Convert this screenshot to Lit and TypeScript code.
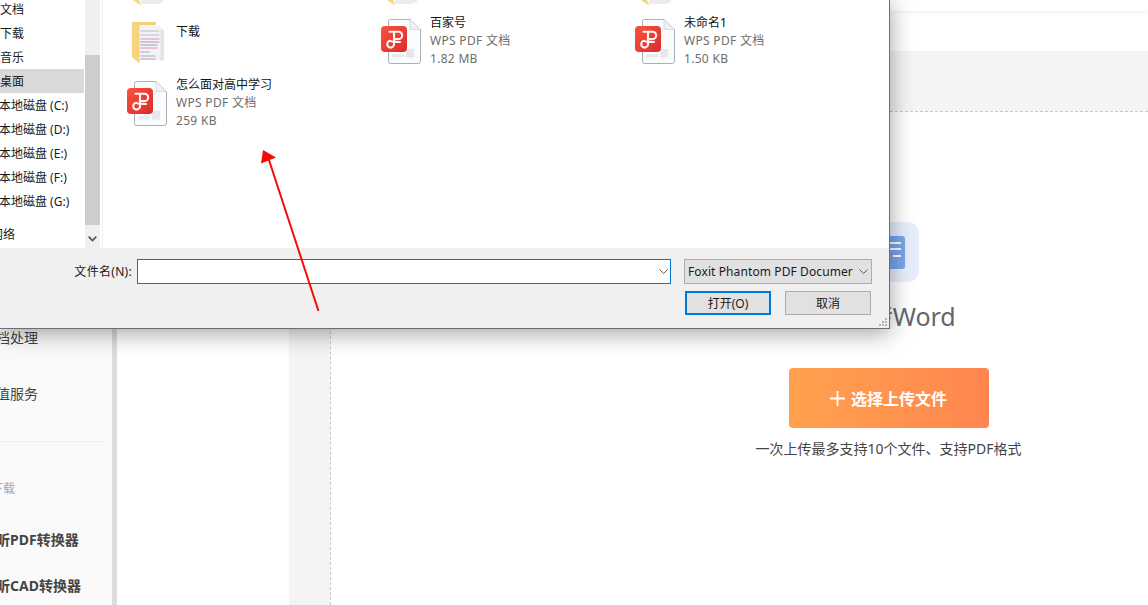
import { LitElement, html, css, svg } from "lit";
import { customElement } from "lit/decorators.js";

const chevron = svg`<path d="M0.500 0.500 L4.500 4.500 L8.500 0.500" fill="none" stroke="#555" stroke-width="1"/>`;

const pdfIcon = html`<svg class="ficon" width="40" height="46" viewBox="0 0 40 46">
  <defs><linearGradient id="pg" x1="0" y1="0" x2="1" y2="1"><stop offset="0" stop-color="#fb5240"/><stop offset="1" stop-color="#d92c2c"/></linearGradient></defs>
  <path d="M7.500 2.500 Q7.500 .5 9.500 .5 H29 L39.500 10.500 V42.500 Q39.500 44.500 37.500 44.500 H9.500 Q7.500 44.500 7.500 42.500 Z" fill="#f9fbfd" stroke="#aab0ba"/>
  <path d="M29 .5 V10.500 H39.500" fill="#eef0f4" stroke="#c8ccd3" stroke-width=".6"/>
  <rect x="11" y="35" width="12" height="3.500" fill="#e9ebef"/>
  <rect x="25" y="30" width="8" height="8.500" fill="#e6e8ec"/>
  <rect x="0" y="7" width="26" height="26" rx="4" fill="url(#pg)"/>
  <path d="M8.500 12.700 H17.500 A3.700 3.700 0 0 1 17.500 20.100 H13 M13 12.700 V25.200 A3.400 3.400 0 1 1 9.600 21.800 Q10 23 19 23" fill="none" stroke="#fff" stroke-opacity=".95" stroke-width="2.100" stroke-linecap="round" stroke-linejoin="round"/>
</svg>`;

const folderIcon = html`<svg class="ficon folder" width="34" height="42" viewBox="0 0 36 42" preserveAspectRatio="none">
  <path d="M1 0 H26 V8 H9 V41 L1 35 Z" fill="#f4d683"/>
  <path d="M9 3 H31 V38 H9 Z" fill="#f3f3f5"/>
  <path d="M31 6 L35 8 V38 L31 39 Z" fill="#e4e4e6"/>
  <path d="M9 3 L26 3 V0 H1 L9 3Z" fill="#f0cf78"/>
  <g stroke-width="1">
    <path d="M10 9 H30 M10 13 H30" stroke="#b9b9c4"/>
    <path d="M10 17 H30" stroke="#cd8fd2"/>
    <path d="M10 20 H30 M10 23 H28" stroke="#9a9ab0"/>
    <path d="M10 26 H28" stroke="#e08dba"/>
    <path d="M10 30 H20 M10 34 H26" stroke="#a2a2bc"/>
    <path d="M10 37 H26" stroke="#bc92d2"/>
  </g>
  <path d="M1 0 L9 5 V41 L1 35 Z" fill="#f5d47f"/>
</svg>`;

const folderPeek = html`<svg class="peek" width="32" height="6" viewBox="0 0 32 6">
  <path d="M0 0 H6 L8 5 H7 Z" fill="#f4d683"/><path d="M8 0 H30 V2 L24 4 H8 Z" fill="#ececec"/>
</svg>`;

@customElement("app-root")
export class AppRoot extends LitElement {
  static styles = css`
    :host { display: block; position: relative; width: 1148px; height: 605px; overflow: hidden; background: #fff;
      font-family: "Noto Sans", "Noto Sans CJK SC", sans-serif; }
    .page { display: flex; height: 605px; }
    .side { width: 112px; flex: none; background: #fafafa; padding-top: 310px; box-sizing: border-box; color: #444; font-size: 14px; overflow: hidden; }
    .side-row { height: 56px; line-height: 56px; margin-left: -18px; white-space: nowrap; }
    .side hr { border: 0; border-top: 1px solid #efefef; margin: 19px 7px 0 0; }
    .side-sub { margin: 33px 0 0 -45px; height: 28px; line-height: 28px; font-size: 12px; color: #a3a5bd; white-space: nowrap; }
    .side-bold { margin: 21px 0 0 -18px; height: 31px; line-height: 31px; font-weight: 700; white-space: nowrap; }
    .side-bold + .side-bold { margin-top: 15px; }
    .rule { width: 5px; flex: none; background: #dcdcdc; }
    .panel { width: 172px; flex: none; background: #fff; }
    .main { flex: 1; display: flex; flex-direction: column; min-width: 0; }
    .top { height: 11px; flex: none; background: #fff; box-shadow: 0 1px 4px rgba(0,0,0,.08); position: relative; }
    .sub { height: 40px; flex: none; background: #fff; }
    .work { flex: 1; background: #f4f4f4; padding: 60px 0 0 41px; display: flex; min-height: 0; }
    .drop { flex: 1; background: #fff; border-left: 1px dashed #c8c8c8; border-top: 1px dashed #c8c8c8; padding: 110px 0 0 298px;
      display: flex; flex-direction: column; align-items: center; }
    .tile { width: 60px; height: 60px; border-radius: 12px; background: #e6eefc; display: flex; align-items: center; justify-content: center; }
    .tile svg { display: block; }
    .title { margin-top: 16px; height: 36px; line-height: 36px; font-size: 25px; color: #62676f; }
    .go { margin-top: 34px; width: 200px; height: 60px; border-radius: 4px; background: linear-gradient(90deg, #ffa24e, #ff8650);
      color: #fff; font-size: 16px; font-weight: 700; display: flex; align-items: center; justify-content: center; gap: 6px; }
    .go svg { display: block; }
    .hint { margin-top: 11px; line-height: 20px; font-size: 14px; color: #444; white-space: nowrap; }

    .dialog { position: absolute; left: 0; top: 0; width: 890px; height: 329px; box-sizing: border-box; background: #f0f0f0;
      border-right: 1px solid #6e6e6e; border-bottom: 1px solid #6e6e6e; box-shadow: 0 4px 22px rgba(0,0,0,.38);
      display: flex; flex-direction: column; font-size: 12px; color: #1a1a1a; }
    .body { height: 248px; flex: none; display: flex; background: #fff; overflow: hidden; }
    .nav { width: 85px; flex: none; overflow: hidden; }
    .nav-row { height: 24px; line-height: 26px; margin-right: 1px; white-space: nowrap; }
    .nav-row:first-child { margin-top: -3px; }
    .nav-row.sel { background: #d9d9d9; }
    .nav-row.clip { text-indent: -1px; }
    .nav-row.net { margin-top: 8px; text-indent: -9px; line-height: 28px; }
    .bar { width: 15px; flex: none; background: #f0f0f0; display: flex; flex-direction: column; }
    .bar-gap { height: 55px; flex: none; }
    .thumb { height: 170px; flex: none; background: #cdcdcd; }
    .bar-arrow { flex: 1; display: flex; align-items: center; justify-content: center; padding-top: 5px; padding-right: 1px; }
    .bar-arrow svg { display: block; }
    .split { width: 1px; flex: none; margin-left: 2px; background: #f0f0f0; }
    .files { flex: 1; padding-left: 19px; margin-top: -49px; display: grid; grid-template-columns: repeat(3, 254px); grid-auto-rows: 62px; align-content: start; }
    .file { position: relative; display: flex; min-width: 0; }
    .ficon { display: block; flex: none; margin: 6px 9px 0 5px; }
    .folder { margin: 9px 11px 0 9px; }
    .peek { display: block; margin: 49px 0 0 11px; }
    .meta { display: flex; flex-direction: column; padding-top: 1px; line-height: 18px; color: #6d6d6d; }
    .meta span { letter-spacing: .3px; }
    .meta b { font-weight: 400; color: #111; }
    .meta.single { padding-top: 10px; }
    .foot { flex: 1; position: relative; display: grid; grid-template-columns: 137px 534px 187px; padding-top: 11px; align-content: start; }
    .lbl { line-height: 26px; text-align: right; padding-right: 5px; white-space: nowrap; letter-spacing: .3px; }
    .input { height: 25px; box-sizing: border-box; background: #fff; border: 1px solid #0078d7; display: flex; align-items: center; justify-content: flex-end; padding-right: 2px; }
    .input svg, .select svg { display: block; flex: none; }
    .select { height: 25px; box-sizing: border-box; margin-left: 13px; width: 188px; background: #e1e1e1; border: 1px solid #adadad; display: flex; align-items: center;
      padding: 0 3px; gap: 3px; overflow: hidden; letter-spacing: .1px; }
    .select span { flex: 1; overflow: hidden; white-space: nowrap; }
    .actions { grid-column: 3; display: flex; margin: 6px 0 0 14px; gap: 14px; }
    .btn { width: 86px; height: 24px; flex: none; box-sizing: border-box; background: #e1e1e1; border: 1px solid #adadad; display: flex; align-items: center; justify-content: center; }
    .btn.def { border: 2px solid #0078d7; }
    .grip { position: absolute; right: 1px; bottom: 1px; display: block; }
    .arrow { position: absolute; left: 0; top: 0; display: block; pointer-events: none; }
  `;

  private file(name: string, size: string) {
    return html`<div class="file">${pdfIcon}<div class="meta"><b>${name}</b><span>WPS PDF 文档</span><span>${size}</span></div></div>`;
  }

  render() {
    return html`
      <div class="page">
        <aside class="side">
          <div class="side-row">文档处理</div>
          <div class="side-row">增值服务</div>
          <hr />
          <div class="side-sub">客户端下载</div>
          <div class="side-bold">福昕PDF转换器</div>
          <div class="side-bold">福昕CAD转换器</div>
        </aside>
        <div class="rule"></div>
        <div class="panel"></div>
        <main class="main">
          <div class="top"></div>
          <div class="sub"></div>
          <div class="work">
            <section class="drop">
              <div class="tile">
                <svg width="32" height="33" viewBox="0 0 32 33">
                  <path d="M3 0 H29 Q32 0 32 3 V30 Q32 33 29 33 H3 Q0 33 0 30 V3 Q0 0 3 0Z" fill="#7ba6ee"/>
                  <path d="M8 7 H28 M8 13 H28 M20 20 H28" stroke="#fff" stroke-width="1.800"/>
                </svg>
              </div>
              <div class="title">PDF转Word</div>
              <div class="go">
                <svg width="15" height="15" viewBox="0 0 15 15"><path d="M7.500 0 V15 M0 7.500 H15" stroke="#fff" stroke-width="1.800"/></svg>
                选择上传文件
              </div>
              <div class="hint">一次上传最多支持10个文件、支持PDF格式</div>
            </section>
          </div>
        </main>
      </div>

      <div class="dialog">
        <div class="body">
          <nav class="nav">
            <div class="nav-row">文档</div>
            <div class="nav-row">下载</div>
            <div class="nav-row">音乐</div>
            <div class="nav-row sel">桌面</div>
            <div class="nav-row clip">本地磁盘 (C:)</div>
            <div class="nav-row clip">本地磁盘 (D:)</div>
            <div class="nav-row clip">本地磁盘 (E:)</div>
            <div class="nav-row clip">本地磁盘 (F:)</div>
            <div class="nav-row clip">本地磁盘 (G:)</div>
            <div class="nav-row net">网络</div>
          </nav>
          <div class="bar">
            <div class="bar-gap"></div>
            <div class="thumb"></div>
            <div class="bar-arrow">
              <svg width="9" height="6" viewBox="0 0 9 6"><path d="M.7 .7 L4.500 4.500 L8.300 .7" fill="none" stroke="#555" stroke-width="1.700"/></svg>
            </div>
          </div>
          <div class="split"></div>
          <div class="files">
            <div class="file">${folderPeek}</div>
            <div class="file">${folderPeek}</div>
            <div class="file">${folderPeek}</div>
            <div class="file">${folderIcon}<div class="meta single"><b>下载</b></div></div>
            ${this.file("百家号", "1.82 MB")}
            ${this.file("未命名1", "1.50 KB")}
            ${this.file("怎么面对高中学习", "259 KB")}
          </div>
        </div>
        <div class="foot">
          <div class="lbl">文件名(N):</div>
          <div class="input"><svg width="9" height="5" viewBox="0 0 9 5">${chevron}</svg></div>
          <div class="select"><span>Foxit Phantom PDF Documer</span><svg width="9" height="5" viewBox="0 0 9 5">${chevron}</svg></div>
          <div class="actions">
            <div class="btn def">打开(O)</div>
            <div class="btn">取消</div>
          </div>
          <svg class="grip" width="10" height="10" viewBox="0 0 10 10" fill="#b4b4b4">
            <rect x="7" y="1" width="2" height="2"/><rect x="4" y="4" width="2" height="2"/><rect x="7" y="4" width="2" height="2"/>
            <rect x="1" y="7" width="2" height="2"/><rect x="4" y="7" width="2" height="2"/><rect x="7" y="7" width="2" height="2"/>
          </svg>
        </div>
      </div>

      <svg class="arrow" width="1148" height="605" viewBox="0 0 1148 605">
        <path d="M318.500 311 L268 157" stroke="#fa0808" stroke-width="2" fill="none"/>
        <path d="M263 150 L261 163.500 L276 157.500 Z" fill="#fa0808"/>
      </svg>
    `;
  }
}
